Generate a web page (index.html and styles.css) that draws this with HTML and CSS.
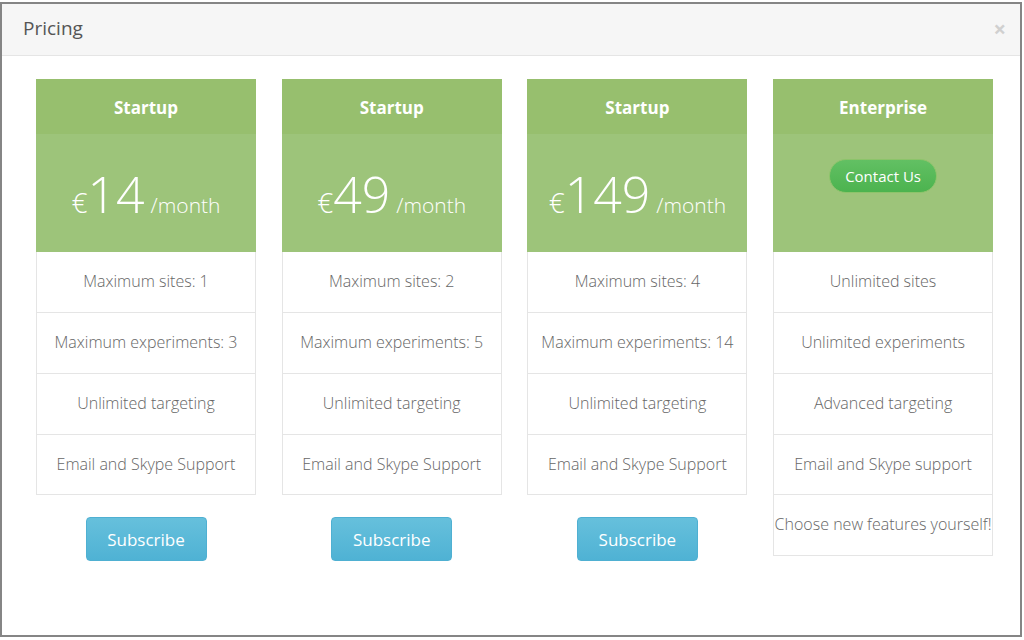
FILE: index.html
```html
<!DOCTYPE html>
<html>
<head>
  <title>Pricing</title>
  <meta charset="UTF-8">
  <link rel="stylesheet" href="styles.css">
</head>
<body>
  <div class="modal">
    <div class="modal-header">
      <h4>Pricing</h4>
      <span class="close">&times;</span>
    </div>

    <div class="modal-body">
      <!-- STARTUP 14 -->
      <div class="plan">
        <div class="plan-title">Startup</div>
        <div class="plan-price"><span class="cur">&euro;</span><span class="num">14</span><span class="per">/month</span></div>
        <ul class="features">
          <li>Maximum sites: 1</li>
          <li>Maximum experiments: 3</li>
          <li>Unlimited targeting</li>
          <li>Email and Skype Support</li>
        </ul>
        <button class="btn-subscribe">Subscribe</button>
      </div>

      <!-- STARTUP 49 -->
      <div class="plan">
        <div class="plan-title">Startup</div>
        <div class="plan-price"><span class="cur">&euro;</span><span class="num">49</span><span class="per">/month</span></div>
        <ul class="features">
          <li>Maximum sites: 2</li>
          <li>Maximum experiments: 5</li>
          <li>Unlimited targeting</li>
          <li>Email and Skype Support</li>
        </ul>
        <button class="btn-subscribe">Subscribe</button>
      </div>

      <!-- STARTUP 149 -->
      <div class="plan">
        <div class="plan-title">Startup</div>
        <div class="plan-price"><span class="cur">&euro;</span><span class="num">149</span><span class="per">/month</span></div>
        <ul class="features">
          <li>Maximum sites: 4</li>
          <li>Maximum experiments: 14</li>
          <li>Unlimited targeting</li>
          <li>Email and Skype Support</li>
        </ul>
        <button class="btn-subscribe">Subscribe</button>
      </div>

      <!-- ENTERPRISE -->
      <div class="plan">
        <div class="plan-title">Enterprise</div>
        <div class="plan-price plan-contact"><button class="btn-contact">Contact Us</button></div>
        <ul class="features">
          <li>Unlimited sites</li>
          <li>Unlimited experiments</li>
          <li>Advanced targeting</li>
          <li>Email and Skype support</li>
          <li>Choose new features yourself!</li>
        </ul>
      </div>
    </div>
  </div>
</body>
</html>
```

FILE: styles.css
```css
html, body { margin: 0; padding: 0; background: #fff; }
body {
  font-family: 'Open Sans', 'Liberation Sans', sans-serif;
  width: 1024px;
  height: 640px;
  overflow: hidden;
}
.modal {
  margin-top: 2px;
  width: 1022px;
  height: 635px;
  box-sizing: border-box;
  border: 2px solid #858585;
  background: #fff;
}
.modal-header {
  display: flex;
  align-items: center;
  justify-content: space-between;
  height: 51px;
  padding: 0 14px 0 21px;
  background: #f6f6f6;
  border-bottom: 1px solid #e5e5e5;
}
.modal-header h4 { margin: 0 0 3px; font-size: 19px; font-weight: 400; color: #555; }
.close { font-size: 22px; font-weight: 700; color: #d0d0d0; line-height: 1; margin-bottom: 4px; }

.modal-body {
  display: grid;
  grid-template-columns: repeat(4, 220px);
  column-gap: 25.7px;
  padding: 23px 0 0 34px;
  align-items: start;
}
.plan { display: flex; flex-direction: column; }
.plan-title {
  height: 55px;
  line-height: 57px;
  text-align: center;
  background: #97bf6e;
  color: #fff;
  font-weight: 700;
  font-size: 17px;
}
.plan-price {
  height: 118px;
  background: #9dc47a;
  color: #fff;
  display: flex;
  justify-content: center;
  align-items: baseline;
  padding-top: 35px;
  box-sizing: border-box;
  font-weight: 300;
}
.plan-price .cur { font-size: 28px; }
.plan-price .num { font-size: 50px; line-height: 1; margin-right: 6px; }
.plan-price .per { font-size: 21px; }
.plan-contact { align-items: flex-start; padding-top: 25px; }

.features {
  list-style: none;
  margin: 0;
  padding: 0;
  border: 1px solid #e5e5e5;
  border-top: none;
}
.features li {
  height: 60px;
  line-height: 58px;
  text-align: center;
  font-size: 16px;
  font-weight: 300;
  color: #666;
  white-space: nowrap;
}
.features li + li { border-top: 1px solid #e5e5e5; }
.features li:nth-child(4) { height: 59px; }

.btn-subscribe {
  align-self: center;
  margin-top: 22px;
  width: 121px;
  height: 44px;
  border: 1px solid #4fb0d2;
  border-radius: 4px;
  background: linear-gradient(#66c0dc, #4fb2d4);
  color: #fff;
  font-family: inherit;
  font-size: 17px;
  cursor: pointer;
}
.btn-contact {
  height: 34px;
  padding: 0 15px;
  border: 1px solid #8cc46a;
  border-radius: 17px;
  background: linear-gradient(#62c063, #4cb34f);
  color: #fff;
  font-family: inherit;
  font-size: 15px;
  cursor: pointer;
}
```
